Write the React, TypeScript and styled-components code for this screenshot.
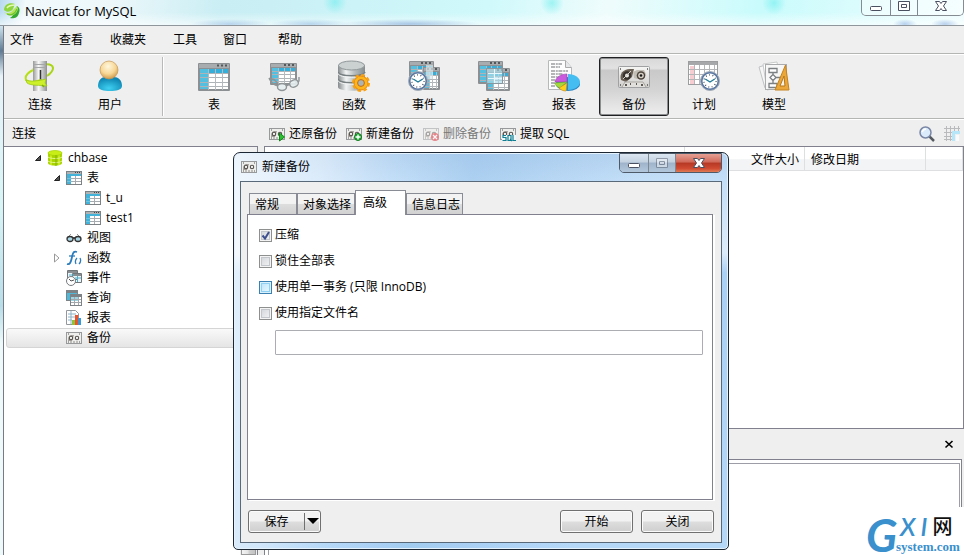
import React, { useState } from "react";
import styled, { createGlobalStyle, css } from "styled-components";

const UI_FONT = `"Open Sans", "Noto Sans CJK SC", sans-serif`;

const GlobalStyle = createGlobalStyle`
  *, *::before, *::after { box-sizing: border-box; }
  html, body, #root { height: 100%; }
  body {
    margin: 0;
    overflow: hidden;
    font: 12px/20px ${UI_FONT};
    color: #000;
    background: #fff;
  }
  button, input { font: inherit; color: inherit; }
  svg { display: block; flex: none; }
`;

/* ---------- icons ---------- */

const TableGlyph = ({ x = 0, y = 0, w = 32, h = 28 }: { x?: number; y?: number; w?: number; h?: number }) => {
  const bar = Math.round(h * 0.17);
  const col = Math.round(w * 0.27);
  const rows = [1, 2, 3, 4];
  const bodyH = h - bar - 2;
  return (
    <g transform={`translate(${x} ${y})`}>
      <rect width={w} height={h} rx="1" fill="#8d9092" />
      <rect x="1" y="1" width={w - 2} height={bar - 1} fill="#a9acae" />
      <path d={`M${w - 13} ${bar / 2}h2m2 0h2m2 0h2`} stroke="#54585b" strokeWidth="2" />
      <rect x="2" y={bar + 1} width={w - 4} height={bodyH - 1} fill="#fff" />
      <rect x="2" y={bar + 1} width={w - 4} height={Math.round(bodyH / 5)} fill="#35aeda" />
      <rect x="2" y={bar + 1} width={col - 1} height={bodyH - 1} fill="#55bfdf" />
      {rows.map((r) => (
        <path key={r} d={`M2 ${bar + 1 + Math.round((r * bodyH) / 5) + 0.5}H${w - 2}`} stroke="#adb3b6" />
      ))}
      {[0, 1, 2].map((c) => (
        <path key={c} d={`M${col + 1.5 + Math.round((c * (w - col - 2)) / 3)} ${bar + 1}V${h - 1}`} stroke="#b4babd" />
      ))}
    </g>
  );
};

const ClockGlyph = ({ cx, cy, r }: { cx: number; cy: number; r: number }) => (
  <g>
    <circle cx={cx} cy={cy} r={r} fill="#5a78a3" stroke="#a6afb9" />
    <circle cx={cx} cy={cy} r={r - 2} fill="#fff" />
    <circle cx={cx} cy={cy} r={r - 3.4} fill="none" stroke="#38434f" strokeWidth="1.4" strokeDasharray="0.8 2.6" />
    <path d={`M${cx - r / 2} ${cy - 2}L${cx} ${cy + 1}L${cx + r / 2} ${cy - 2}`} fill="none" stroke="#237b98" strokeWidth="1.4" />
  </g>
);

const ServerIcon = () => (
  <svg width="32" height="32" viewBox="0 0 32 32">
    <defs>
      <linearGradient id="metal"><stop stopColor="#999" /><stop offset=".4" stopColor="#f8f8f8" /><stop offset="1" stopColor="#8f9192" /></linearGradient>
    </defs>
    <path d="M9 9C16 4 28 2 29 8c0 3-3 6-6 8" fill="none" stroke="#a9d514" strokeWidth="2" />
    <rect x="9" y="1" width="14" height="30" fill="url(#metal)" />
    <path d="M10 4.500h12M10 7.500h12" stroke="#a4a6a7" />
    <path d="M16.500 10v10" stroke="#333" strokeWidth="1.500" />
    <path d="M9 10C3 13 1 17 2 20c3 3 10 2 15 0" fill="none" stroke="#b7df18" strokeWidth="2" />
    <path d="M2 20c4 2 12 1 20-1l-1 4 2 3c-7-1-16 0-20-3z" fill="#cdf02a" stroke="#97c60f" strokeWidth=".7" />
    <path d="M18 25l2 2" stroke="#7fae08" strokeWidth="1.500" />
  </svg>
);

const UserIcon = () => (
  <svg width="32" height="32" viewBox="0 0 32 32">
    <defs>
      <radialGradient id="head" cx=".45" cy=".3" r=".7"><stop stopColor="#fff7df" /><stop offset=".6" stopColor="#f7d795" /><stop offset="1" stopColor="#cf9a4c" /></radialGradient>
      <radialGradient id="torso" cx=".45" cy=".8" r=".7"><stop stopColor="#3fd0f2" /><stop offset="1" stopColor="#0e87b4" /></radialGradient>
    </defs>
    <path d="M4 26c0-6 4-9 7-9h9c4 0 8 3 8 9 0 4-6 5-12 5S4 30 4 26z" fill="url(#torso)" />
    <circle cx="15" cy="10" r="9" fill="url(#head)" stroke="#c69654" strokeWidth=".7" />
  </svg>
);

const TableIcon = () => (
  <svg width="32" height="32" viewBox="0 0 32 32"><TableGlyph x={0} y={3} w={32} h={28} /></svg>
);

const ViewIcon = () => (
  <svg width="32" height="32" viewBox="0 0 32 32">
    <TableGlyph x={2} y={3} w={27} h={22} />
    <g fill="#e6eeef" fillOpacity=".9" stroke="#8f9496" strokeWidth="1.400">
      <path d="M1 18.500l5 1 4 4M31 17v4l-4 4" fill="none" />
      <ellipse cx="14" cy="27" rx="4.500" ry="3.500" /><ellipse cx="26" cy="23.500" rx="4.500" ry="3.500" transform="rotate(-25 26 23.500)" />
      <path d="M1 18c2 5 5 7 9 8M18 26l4-2" fill="none" />
    </g>
  </svg>
);

const FunctionIcon = () => (
  <svg width="32" height="32" viewBox="0 0 32 32">
    <defs>
      <linearGradient id="drum"><stop stopColor="#858a8c" /><stop offset=".3" stopColor="#f2f4f4" /><stop offset=".6" stopColor="#b9bfc0" /><stop offset="1" stopColor="#858d8f" /></linearGradient>
    </defs>
    <path d="M0 5v22c0 5 27 5 27 0V5z" fill="url(#drum)" />
    <ellipse cx="13.500" cy="5.500" rx="13" ry="4.500" fill="#cbd1d1" stroke="#909798" />
    <path d="M0 12c1 5 26 5 27 0M0 19c1 5 26 5 27 0" fill="none" stroke="#777f80" strokeWidth="1.500" />
    <path d="M0 13.500c1 5 26 5 27 0M0 20.500c1 5 26 5 27 0" fill="none" stroke="#f4f6f6" />
    <circle cx="23" cy="23" r="7" fill="#fcb51b" stroke="#ee860b" strokeWidth="1" />
    <circle cx="23" cy="23" r="8" fill="none" stroke="#f8a010" strokeWidth="2" strokeDasharray="3.600 2.683" />
    <circle cx="23" cy="23" r="3.400" fill="#aab4b4" stroke="#c96a0c" />
  </svg>
);

const EventIcon = () => (
  <svg width="32" height="32" viewBox="0 0 32 32">
    <TableGlyph x={1} y={1} w={25} h={22} /><TableGlyph x={15} y={7} w={17} h={23} />
    <path d="M18 5h7v14h-7z" fill="#dae8ed" fillOpacity=".7" />
    <ClockGlyph cx={10} cy={21} r={9.5} />
  </svg>
);

const QueryIcon = () => (
  <svg width="32" height="32" viewBox="0 0 32 32">
    <TableGlyph x={0} y={1} w={25} h={23} /><TableGlyph x={8} y={8} w={24} h={23} />
    <path d="M8.500 8.500h16v15h-16z" fill="#a9dceb" fillOpacity=".65" stroke="#87979d" />
    <path d="M10 13.500h14M10 18.500h14M16.500 9v14" stroke="#e8f7fb" />
  </svg>
);

const ReportIcon = () => (
  <svg width="32" height="32" viewBox="0 0 32 32">
    <path d="M.5.500h17l6 7v22H.500z" fill="#fdfdfd" stroke="#b6b8b9" />
    <path d="M17.500.500v7h6" fill="#e5e7e8" stroke="#aaa" />
    <path d="M3 4h11M3 7h9M3 11h17M3 14h12M3 17h8M3 20h5M3 23h6M3 26h4" stroke="#6a6e71" strokeWidth="1.200" strokeDasharray="4 .8 2 .6" />
    <ellipse cx="20" cy="24" rx="12" ry="7" fill="#2a87c4" />
    <path d="M20 14c7 0 12 4 12 8s-5 8-12 8z" fill="#45bdf0" />
    <path d="M19 14v8L7 22c1-5 6-8 12-8z" fill="#c95bdc" stroke="#9a41ad" strokeWidth=".6" />
    <path d="M7 23l12-1-7 6c-3-1-5-3-5-5z" fill="#a5d93b" stroke="#74a824" strokeWidth=".6" />
    <path d="M19 23l-1 8c-3 0-5-1-7-3z" fill="#ffd11c" stroke="#d08a12" strokeWidth=".6" />
  </svg>
);

const BackupIcon = () => (
  <svg width="32" height="32" viewBox="0 0 32 32">
    <defs><linearGradient id="tape" x2="0" y2="1"><stop stopColor="#f6f6f5" /><stop offset="1" stopColor="#cfcecb" /></linearGradient></defs>
    <rect x=".5" y="6.500" width="31" height="21" rx="1" fill="url(#tape)" stroke="#9fa1a2" />
    <path d="M3 20C1 14 5 9 12 9h4l-2 8-6 5z" fill="#6a6056" />
    <circle cx="9" cy="15.500" r="4.200" fill="#38322e" /><circle cx="9" cy="15.500" r="2" fill="#eceae5" />
    <path d="M5 19l8-8" stroke="#d9d3cb" />
    <path d="M15 12l4-2h7l2 4-3 5h-6l-3-1z" fill="#c3beb5" />
    <circle cx="23" cy="15.500" r="4.300" fill="#4c453d" /><circle cx="23" cy="15.500" r="2.800" fill="#d7d0c4" /><circle cx="23" cy="15.500" r="1.300" fill="#1a1a1a" />
    <path d="M4 27l3-5h18l3 5" fill="#e2e0dc" stroke="#a9a6a0" />
    <path d="M7 25h2m3-1h1m5 0h1m4 1h2" stroke="#5c5853" strokeWidth="2" />
    <path d="M2 9h1M29 9h1M2 25h1M29 25h1" stroke="#555" strokeWidth="1.500" />
  </svg>
);

const ScheduleIcon = () => (
  <svg width="32" height="32" viewBox="0 0 32 32">
    <rect x=".5" y="1.500" width="29" height="23" fill="#fff" stroke="#9b9d9f" />
    <path d="M1 2h28v3H1z" fill="#a6a8aa" />
    <path d="M2 6h4v18H2z" fill="#f8cdd1" />
    <path d="M1 9.500h28M1 14.500h28M1 19.500h28M6.500 5v19M11.500 5v19M16.500 5v19M21.500 5v19M26.500 5v19" stroke="#b4b6b8" />
    <ClockGlyph cx={22} cy={21} r={9.5} />
  </svg>
);

const ModelIcon = () => (
  <svg width="32" height="32" viewBox="0 0 32 32">
    <path d="M1 7l13-4 6 22-13 3z" fill="#f6f6f6" stroke="#bfc1c2" />
    <path d="M5 4l14-2 4 25-14 3z" fill="#fff" stroke="#c8cacb" />
    <rect x="7.500" y="4.500" width="21" height="25" fill="#f7f7f7" stroke="#a9abac" />
    <path d="M11 8.500h8v4h-8zM11 23.500h8v4h-8zM15 12.500v2l3 3-3 3-3-3 3-3M15 20.500v3M18 17.500h6" fill="#fff" stroke="#7c8082" strokeWidth="1.300" />
    <path d="M27.500 5L31 30H17z" fill="#eba73a" stroke="#c4821c" /><path d="M26 16l1 10h-5z" fill="#f5f2e8" stroke="#b77718" />
  </svg>
);

const MiniTable = () => (
  <svg width="16" height="16" viewBox="0 0 16 16" shapeRendering="crispEdges">
    <path d="M0 1h16v14H0z" fill="#7d8285" /><path d="M1 2h14v2H1z" fill="#aeb3b5" />
    <path d="M9 2h1v1H9zM11 2h1v1h-1zM13 2h1v1h-1z" fill="#444" />
    <path d="M1 4h14v10H1z" fill="#fff" /><path d="M1 4h4v10H1zM1 4h14v2H1z" fill="#43b3da" />
    <path d="M5 8h10v1H5zM5 11h10v1H5zM9 6h1v8H9z" fill="#a5abae" />
    <path d="M1 8h4v1H1zM1 11h4v1H1z" fill="#6cc5e2" />
  </svg>
);

const MiniDatabase = () => (
  <svg width="16" height="16" viewBox="0 0 16 16">
    <path d="M1 3v10c0 3.500 14 3.500 14 0V3z" fill="#a9d400" />
    <path d="M4 4v11M12 4v11" stroke="#c9ea22" strokeWidth="2" />
    <ellipse cx="8" cy="3" rx="7" ry="2.500" fill="#c9ee17" stroke="#a5d000" strokeWidth=".7" />
    <path d="M1 7c2 2 12 2 14 0M1 11c2 2 12 2 14 0" fill="none" stroke="#e4f78c" /><path d="M9 5v11" stroke="#84b000" />
  </svg>
);

const MiniGlasses = () => (
  <svg width="16" height="16" viewBox="0 0 16 16">
    <path d="M2 7l3-3M11 4l3 3" stroke="#999" fill="none" />
    <ellipse cx="4" cy="9" rx="3" ry="2.500" fill="#a9d6e4" stroke="#333" strokeWidth="1.300" />
    <ellipse cx="12" cy="9" rx="3" ry="2.500" fill="#a9d6e4" stroke="#333" strokeWidth="1.300" /><path d="M7 8h2" stroke="#222" strokeWidth="1.500" />
  </svg>
);

const MiniFunction = () => (
  <svg width="16" height="16" viewBox="0 0 16 16" fill="none" stroke="#2d7cbb">
    <path d="M1 14c3 1 4-2 5-7s2-6 5-5" strokeWidth="1.800" /><path d="M3 6h6" strokeWidth="1.300" />
    <path d="M11 8c-2 2-2 4-1 6M14 8c1 2 1 4-1 6" strokeWidth="1.300" />
  </svg>
);

const MiniEvent = () => (
  <svg width="16" height="16" viewBox="0 0 16 16">
    <path d="M1.500.500h10v9h-10zM6.500 3.500h9v9h-9z" fill="#e8f5fa" stroke="#707679" />
    <path d="M2 2h9M7 5h8" stroke="#888e91" strokeWidth="2" /><path d="M3 5h5M9 8h6M11.500 6v6" stroke="#51aecb" />
    <circle cx="5" cy="11" r="4.500" fill="#fff" stroke="#777b7e" /><path d="M3 9l2 2 3-1" fill="none" stroke="#555" />
  </svg>
);

const MiniQuery = () => (
  <svg width="16" height="16" viewBox="0 0 16 16" shapeRendering="crispEdges">
    <path d="M0 0h12v11H0z" fill="#7c8285" /><path d="M1 3h10v7H1z" fill="#4fb7d8" />
    <path d="M4 4h12v12H4z" fill="#7c8285" /><path d="M5 7h10v8H5z" fill="#fff" />
    <path d="M5 7h7v4H5z" fill="#9dd7e6" /><path d="M5 9h10v1H5zM5 12h10v1H5zM8 7h1v8H8zM12 7h1v8h-1z" fill="#a2a8ab" />
  </svg>
);

const MiniReport = () => (
  <svg width="16" height="16" viewBox="0 0 16 16">
    <path d="M.5.500h9l3 3v11H.500z" fill="#fff" stroke="#92989c" /><path d="M2 4h8M2 7h8M2 10h4M5 1v13" stroke="#8eb4c6" />
    <path d="M6 10h3v5H6z" fill="#8ac53a" /><path d="M9 5h3v10H9z" fill="#e8542c" /><path d="M12 8h3v7h-3z" fill="#3d97d0" />
  </svg>
);

type Mark = "restore" | "add" | "remove" | "sql";
const MiniTape = ({ mark }: { mark?: Mark }) => (
  <svg width="16" height="16" viewBox="0 0 16 16" opacity={mark === "remove" ? 0.5 : 1}>
    <rect x=".5" y="2.500" width="15" height="11" fill="#eeeeec" stroke="#97999b" />
    <path d="M2 11c0-6 2-6 6-6l-2 6z" fill="#a39e99" />
    <circle cx="5" cy="8" r="1.700" fill="#f5f5f5" stroke="#57524e" strokeWidth="1.100" />
    <circle cx="11" cy="8" r="1.700" fill="#f5f5f5" stroke="#57524e" strokeWidth="1.100" />
    <path d="M4 12h8" stroke="#8e8c89" strokeDasharray="2 1" />
    <path d="M2 4h1M13 4h1M2 12h1M13 12h1" stroke="#555" />
    {mark === "restore" && <path d="M10.500 7v8l5-4z" fill="#2fbf32" stroke="#0a8912" />}
    {mark === "add" && <g><circle cx="12" cy="11" r="3.500" fill="#26a838" stroke="#0e7d1d" /><path d="M9.500 11h5M12 8.500v5" stroke="#fff" strokeWidth="1.400" /></g>}
    {mark === "remove" && <g><circle cx="12" cy="11" r="4" fill="#d8202a" /><path d="M10 9l4 4M14 9l-4 4" stroke="#fff" strokeWidth="1.300" /></g>}
    {mark === "sql" && (
      <g>
        <path d="M2 9h14v6H2z" fill="#eef8fa" />
        <path d="M6 9.500H3v2h3v3H2.500M8 9.500h3v5H8zM10 13l2 2M13 9v5.500h3" fill="none" stroke="#107d91" strokeWidth="1.200" />
      </g>
    )}
  </svg>
);

const AppLogo = () => (
  <svg width="16" height="16" viewBox="0 0 16 16">
    <path d="M0 7C0 2 5-1 11 1L9 6C7 9 3 10 0 7z" fill="#8fd63c" /><path d="M3 5c2-3 5-3 8-3" stroke="#e4fab4" strokeWidth="1.500" fill="none" />
    <path d="M13 3c3 2 3 4 2 7-1 5-6 6-9 5 3-2 3-3 4-7z" fill="#35a932" />
    <path d="M0 9c3 2 7 1 9-2l4-4 1 3c-2 7-8 9-14 3z" fill="#b5e65a" />
    <path d="M3 11c4 2 8 0 10-5" fill="none" stroke="#6cc22e" strokeWidth="1.200" />
  </svg>
);

const SearchGlyph = () => (
  <svg width="16" height="16" viewBox="0 0 16 16">
    <path d="M10 10l5 5" stroke="#555a60" strokeWidth="2.500" /><circle cx="6.500" cy="6.500" r="5.500" fill="#dcebfb" stroke="#7a86a5" strokeWidth="1.500" />
    <path d="M3 6c1-2 2-3 4-3" stroke="#fff" strokeWidth="1.500" fill="none" />
  </svg>
);

const GridGlyph = () => (
  <svg width="16" height="16" viewBox="0 0 16 16" shapeRendering="crispEdges">
    <path d="M2.500 0v15M6.500 0v15M10.500 0v6M14.500 0v6M0 2.500h16M0 6.500h8M0 10.500h8M0 13.500h8" stroke="#b8babb" />
    <path d="M8 5h8v3h-5v7H8z" fill="#b6e6f7" /><path d="M12 9h3v6h-3z" fill="#fafafa" />
  </svg>
);

const WindowGlyph = ({ kind, muted }: { kind: "min" | "max" | "close"; muted?: boolean }) => (
  <svg width="14" height="12" viewBox="0 0 14 12" opacity={muted ? 0.45 : 1}>
    {kind === "min" && <rect x="1.500" y="6.500" width="11" height="4" rx="1" fill="#fff" stroke="#4b5061" />}
    {kind === "max" && <path d="M1.500 1.500h11v9h-11zM4.500 4.500h5v3h-5z" fill="#fff" stroke="#4b5061" />}
    {kind === "close" && <path d="M1.500 1.500h4L7 3.500l1.500-2h4L9.500 6l3 4.500h-4L7 8.500l-1.500 2h-4l3-4.500z" fill="#fff" stroke="#4b5061" />}
  </svg>
);

/* ---------- main window ---------- */

const Desktop = styled.main`
  position: relative;
  height: 100%;
  min-height: 420px;
  display: flex;
  flex-direction: column;
  overflow: hidden;
`;

const TitleBar = styled.header`
  flex: none;
  height: 26px;
  display: flex;
  align-items: flex-start;
  justify-content: space-between;
  padding-left: 4px;
  border-bottom: 1px solid #8f979d;
  background:
    radial-gradient(ellipse 40px 5px at 230px 24px, rgba(110, 160, 215, 0.4), transparent),
    radial-gradient(ellipse 40px 5px at 310px 24px, rgba(110, 160, 215, 0.4), transparent),
    radial-gradient(ellipse 70px 5px at 410px 24px, rgba(90, 135, 200, 0.45), transparent),
    radial-gradient(ellipse 12px 5px at 905px 24px, rgba(90, 140, 210, 0.4), transparent),
    radial-gradient(ellipse 14px 5px at 945px 24px, rgba(90, 140, 210, 0.4), transparent),
    radial-gradient(ellipse 12px 12px at 335px 2px, rgba(90, 235, 235, 0.5), transparent),
    radial-gradient(ellipse 12px 12px at 552px 3px, rgba(90, 235, 235, 0.5), transparent),
    radial-gradient(ellipse 12px 12px at 774px 3px, rgba(90, 235, 235, 0.5), transparent),
    linear-gradient(rgba(255, 255, 255, 0) 50%, rgba(255, 255, 255, 0.6)),
    linear-gradient(100deg, #b7d9ee 0, #f1f9fb 26px, #edf7fa 110px, #c9eef4 220px, #cff9fb 480px, #effcfc 600px, #c9fbfc 750px, #effdfe 100%);
`;

const AppTitle = styled.h1`
  display: flex;
  align-items: center;
  gap: 5px;
  height: 21px;
  margin: 0;
  font-size: 13px;
  line-height: 20px;
  font-weight: 400;
`;

const CaptionButtons = styled.div<{ $dialog?: boolean }>`
  display: grid;
  grid-template-columns: 28px 27px 46px;
  height: ${(p) => (p.$dialog ? 20 : 16)}px;
  border: 1px solid ${(p) => (p.$dialog ? "#4e5a68" : "#858d92")};
  border-top-width: ${(p) => (p.$dialog ? 1 : 0)}px;
  border-radius: 0 0 5px 5px;
  overflow: hidden;
`;

const CaptionButton = styled.button<{ $tone: "clear" | "steel" | "red" }>`
  display: grid;
  place-items: center;
  padding: 0 0 ${(p) => (p.$tone === "clear" ? 4 : 0)}px;
  border: 0;
  & + & { border-left: 1px solid #7d8892; }
  background: ${(p) =>
    p.$tone === "red"
      ? "linear-gradient(#e5a093, #d0695a 45%, #b53825 50%, #cf4a31 80%, #e07c56)"
      : p.$tone === "steel"
        ? "linear-gradient(#dce7f2, #c3d1e0 45%, #9fb3ca 50%, #b3c7dc)"
        : "rgba(255, 255, 255, 0.45)"};
`;

const FrameBackdrop = styled.div`
  flex: 1;
  min-height: 0;
  display: flex;
  flex-direction: column;
  background: linear-gradient(#cfe4ee, #5f7b94 25px, #e8f3f8 50px, #d9f5f6 180px, #b9dde8 280px, #eefafa 60%);
`;

const Frame = styled.div`
  flex: 1;
  min-height: 0;
  display: flex;
  flex-direction: column;
  margin-left: 3px;
  border-left: 1px solid #777b84;
  background: #efefef;
`;

const MenuBar = styled.nav`
  flex: none;
  height: 28px;
  display: grid;
  grid-template-columns: 49px 51px 63px 50px 55px auto;
  align-items: center;
  justify-content: start;
  padding: 1px 0 0 6px;
  border-bottom: 1px solid #b4b6b4;
`;

const PlainButton = styled.button`
  padding: 0;
  border: 0;
  background: none;
  text-align: left;
  line-height: 20px;
`;

const ToolBar = styled.div`
  flex: none;
  display: flex;
  height: 65px;
  padding: 2px 0 2px 1px;
  border-top: 1px solid #fff;
  border-bottom: 1px solid #b4b6b4;
`;

const ToolDivider = styled.span`
  width: 2px;
  margin: 0 15px 0 17px;
  border-left: 1px solid #b8bab8;
  border-right: 1px solid #fff;
`;

const ToolButton = styled.button<{ $active?: boolean }>`
  width: 70px;
  display: flex;
  flex-direction: column;
  align-items: center;
  justify-content: flex-start;
  gap: 3px;
  padding: 2px 0 0;
  border: 1px solid transparent;
  border-radius: 3px;
  background: none;
  ${(p) =>
    p.$active &&
    css`
      border-color: #1f2123;
      box-shadow: inset 0 0 0 1px #8b8d8e;
      background: linear-gradient(#d8d8d8 0, #e2e2e2 18%, #c9c9c9 22%, #d3d3d3 55%, #eeeeee);
    `}
`;

const SubBar = styled.div`
  flex: none;
  display: flex;
  align-items: center;
  height: 27px;
  padding: 1px 4px 0 8px;
  border-top: 1px solid #fff;
`;

const SubTitle = styled.h2`
  width: 257px;
  margin: 0;
  font-size: 12px;
  font-weight: 400;
`;

const Actions = styled.div`
  flex: 1;
  display: flex;
  gap: 9px;
`;

const ActionButton = styled(PlainButton)`
  display: flex;
  align-items: center;
  gap: 4px;
  &:disabled { color: #777; }
`;

const Tools = styled.div`
  display: flex;
  gap: 9px;
`;

const Workspace = styled.div`
  flex: 1;
  min-height: 0;
  display: grid;
  grid-template-columns: 254px 1fr;
  column-gap: 6px;
`;

const TreePane = styled.aside`
  display: grid;
  grid-template-columns: 1fr 17px;
  border: solid #80808e;
  border-width: 1px 1px 0 0;
  background: #fff;
`;

const ScrollTrack = styled.div`
  padding: 18px 1px 0;
  background: #f0f0f0;
`;

const ScrollThumb = styled.div`
  height: 100%;
  border: 1px solid #9a9a9a;
  background: linear-gradient(90deg, #f4f4f4, #e5e5e5 45%, #cfcfcf 55%, #c2c2c2);
`;

const Tree = styled.ul`
  margin: 0;
  padding: 1px 0 0 2px;
  list-style: none;
  min-width: 0;
`;

const TreeRow = styled.li<{ $level: number; $selected?: boolean }>`
  display: flex;
  align-items: center;
  height: 20px;
  padding-left: ${(p) => 27 + p.$level * 19}px;
  border: 1px solid transparent;
  border-radius: 3px;
  ${(p) =>
    p.$selected &&
    css`
      border-color: #d5d5d5;
      background: linear-gradient(#f9f9f9, #e5e5e5);
    `}
`;

const Twisty = styled.span`
  width: 13px;
  flex: none;
`;

const TreeLabel = styled.span`
  padding-left: 5px;
  white-space: nowrap;
`;

const RightPane = styled.section`
  min-width: 0;
  display: grid;
  grid-template-rows: minmax(0, 283fr) 30px minmax(0, 96fr);
`;

const ListPane = styled.div`
  border: 1px solid #80808e;
  background: #fff;
  overflow: hidden;
`;

const ListTable = styled.table`
  width: 100%;
  table-layout: fixed;
  border-collapse: separate;
  border-spacing: 0;
`;

const HeadCell = styled.th<{ $width?: number; $end?: boolean }>`
  width: ${(p) => (p.$width ? `${p.$width}px` : "auto")};
  height: 24px;
  padding: 2px 5px 0 6px;
  font-weight: 400;
  text-align: ${(p) => (p.$end ? "right" : "left")};
  border: solid #dddfe1;
  border-width: 0 1px 1px 0;
  background: linear-gradient(#fff 50%, #f3f4f5 55%);
`;

const InfoStrip = styled.div`
  display: flex;
  align-items: center;
  justify-content: flex-end;
  padding-right: 10px;
`;

const InfoPane = styled.div`
  margin-right: 2px;
  padding: 3px 1px 0 3px;
  border: solid #80808e;
  border-width: 1px 1px 0 1px;
  background: #fff;
`;

const InfoInner = styled.div`
  height: 100%;
  border: solid #9d9da8;
  border-width: 1px 1px 0 1px;
`;

/* ---------- dialog ---------- */

const Dialog = styled.section`
  position: absolute;
  left: 233px;
  right: 235px;
  top: 152px;
  bottom: 5px;
  display: flex;
  flex-direction: column;
  padding: 0 6px 6px;
  border: 1px solid #1d2733;
  border-radius: 7px 7px 5px 5px;
  box-shadow: inset 0 0 0 1px #e4f2fd;
  background:
    linear-gradient(100deg, rgba(255, 255, 255, 0.75) 0, rgba(255, 255, 255, 0.4) 90px, transparent 160px, rgba(120, 175, 225, 0.3) 240px, transparent 400px),
    linear-gradient(#b6d3f0 0, #c4dff8 28px, #dcebf9 100px, #a9d0f5 120px, #b5d8f8);
`;

const DialogTitle = styled.header`
  flex: none;
  height: 28px;
  display: flex;
  align-items: flex-start;
  justify-content: space-between;
`;

const DialogName = styled.h2`
  display: flex;
  align-items: center;
  gap: 5px;
  height: 28px;
  margin: 0;
  padding-left: 1px;
  font-size: 12px;
  font-weight: 400;
`;

const DialogBody = styled.div`
  flex: 1;
  min-height: 0;
  display: flex;
  flex-direction: column;
  padding: 8px 7px 9px 6px;
  border: 1px solid #59697a;
  background: #efefef;
`;

const TabList = styled.div`
  flex: none;
  display: grid;
  grid-template-columns: 48px 58px 51px 57px;
  align-items: end;
  padding-left: 2px;
  height: 24px;
`;

const Tab = styled.button<{ $active?: boolean }>`
  height: ${(p) => (p.$active ? 25 : 22)}px;
  padding: 0 0 0 ${(p) => (p.$active ? 7 : 5)}px;
  text-align: left;
  line-height: 20px;
  white-space: nowrap;
  border: 1px solid #898c95;
  border-bottom: 0;
  background: linear-gradient(#f3f3f3 45%, #dddddd 50%, #d0d0d0);
  ${(p) =>
    p.$active &&
    css`
      position: relative;
      align-self: start;
      background: #fff;
    `}
`;

const TabPage = styled.div`
  flex: 1;
  min-height: 0;
  display: flex;
  flex-direction: column;
  gap: 6px;
  margin-right: 1px;
  padding: 10px 9px 0 11px;
  border: 1px solid #80808e;
  box-shadow: 2px 1px 0 #fff;
  background: #fff;
`;

const Option = styled.label`
  display: flex;
  align-items: center;
  gap: 3px;
  height: 20px;
`;

const BoxWrap = styled.span`
  position: relative;
  display: block;
  width: 13px;
  height: 13px;
  svg {
    position: absolute;
    inset: 0;
    visibility: hidden;
    pointer-events: none;
  }
  input:checked + svg { visibility: visible; }
`;

const Box = styled.input<{ $hot?: boolean }>`
  appearance: none;
  display: block;
  width: 13px;
  height: 13px;
  margin: 0;
  border: 1px solid ${(p) => (p.$hot ? "#3c7fb1" : "#8e8f8f")};
  box-shadow: inset 0 0 0 1px ${(p) => (p.$hot ? "#d9f1fc" : "#f4f4f4")}, inset 0 0 0 2px ${(p) => (p.$hot ? "#8fd0f3" : "#c3c6cb")};
  background: ${(p) => (p.$hot ? "linear-gradient(135deg, #b5e2fa, #f1fafe)" : "linear-gradient(135deg, #cfd3d8, #f6f6f6)")};
`;

const FileName = styled.input`
  flex: none;
  height: 25px;
  margin: 1px 0 0 16px;
  padding: 0 4px;
  border: 1px solid #abadb3;
  border-radius: 1px;
  background: #fff;
`;

const DialogFooter = styled.footer`
  flex: none;
  display: flex;
  gap: 8px;
  margin-top: 10px;
  padding: 0 0 0 1px;
`;

const face = css`
  height: 23px;
  border: 1px solid #707070;
  border-radius: 3px;
  box-shadow: inset 0 0 0 1px #fbfbfb;
  background: linear-gradient(#f2f2f2 48%, #dddddd 52%, #cfcfcf);
`;

const PushButton = styled.button`
  ${face}
  width: 73px;
  padding: 0;
  line-height: 20px;
`;

const SplitButton = styled.div`
  ${face}
  width: 73px;
  display: grid;
  grid-template-columns: 1fr 16px;
  margin-right: auto;
`;

const SplitPart = styled.button`
  display: grid;
  place-items: center;
  padding: 0;
  line-height: 20px;
  border: 0;
  background: none;
`;

const SplitArrow = styled(SplitPart)`
  margin: 2px 0;
  border-left: 1px solid #707070;
`;

/* ---------- watermark ---------- */

const Watermark = styled.div`
  position: absolute;
  right: 0;
  bottom: 0;
  width: 98px;
  height: 48px;
  display: grid;
  grid-template-columns: 30px 1fr;
  background: #fff;
  color: #3a8fcd;
`;

const BigLetter = styled.span`
  font: italic 700 46px/56px Lato, sans-serif;
`;

const MarkRight = styled.span`
  display: flex;
  flex-direction: column;
`;

const MarkTop = styled.span`
  display: flex;
  align-items: center;
  gap: 5px;
  height: 33px;
  padding: 4px 0 0 4px;
  font: italic 600 25px/28px Lato, sans-serif;
`;

const MarkHan = styled.span`
  color: #111;
  font: 500 20px/28px "Noto Sans CJK SC", sans-serif;
`;

const MarkDomain = styled.span`
  font: bold 13px/14px "Liberation Serif", serif;
`;

/* ---------- data ---------- */

const menus = ["文件", "查看", "收藏夹", "工具", "窗口", "帮助"];

const connectTools = [
  { label: "连接", icon: <ServerIcon /> },
  { label: "用户", icon: <UserIcon /> },
];

const objectTools = [
  { label: "表", icon: <TableIcon /> },
  { label: "视图", icon: <ViewIcon /> },
  { label: "函数", icon: <FunctionIcon /> },
  { label: "事件", icon: <EventIcon /> },
  { label: "查询", icon: <QueryIcon /> },
  { label: "报表", icon: <ReportIcon /> },
  { label: "备份", icon: <BackupIcon />, active: true },
  { label: "计划", icon: <ScheduleIcon /> },
  { label: "模型", icon: <ModelIcon /> },
];

const actions: { label: string; mark: Mark; disabled?: boolean }[] = [
  { label: "还原备份", mark: "restore" },
  { label: "新建备份", mark: "add" },
  { label: "删除备份", mark: "remove", disabled: true },
  { label: "提取 SQL", mark: "sql" },
];

const tree: { label: string; level: number; icon: React.ReactNode; state?: "open" | "closed"; selected?: boolean }[] = [
  { label: "chbase", level: 0, icon: <MiniDatabase />, state: "open" },
  { label: "表", level: 1, icon: <MiniTable />, state: "open" },
  { label: "t_u", level: 2, icon: <MiniTable /> },
  { label: "test1", level: 2, icon: <MiniTable /> },
  { label: "视图", level: 1, icon: <MiniGlasses /> },
  { label: "函数", level: 1, icon: <MiniFunction />, state: "closed" },
  { label: "事件", level: 1, icon: <MiniEvent /> },
  { label: "查询", level: 1, icon: <MiniQuery /> },
  { label: "报表", level: 1, icon: <MiniReport /> },
  { label: "备份", level: 1, icon: <MiniTape />, selected: true },
];

const tabs = ["常规", "对象选择", "高级", "信息日志"];

const options = [
  { label: "压缩" },
  { label: "锁住全部表" },
  { label: "使用单一事务 (只限 InnoDB)", hot: true },
  { label: "使用指定文件名" },
];

export default function App() {
  const [checked, setChecked] = useState([true, false, false, false]);
  const toggle = (i: number) => setChecked((c) => c.map((v, n) => (n === i ? !v : v)));

  return (
    <Desktop>
      <GlobalStyle />
      <TitleBar>
        <AppTitle><AppLogo />Navicat for MySQL</AppTitle>
        <CaptionButtons>
          <CaptionButton $tone="clear" aria-label="最小化"><WindowGlyph kind="min" /></CaptionButton>
          <CaptionButton $tone="clear" aria-label="最大化"><WindowGlyph kind="max" /></CaptionButton>
          <CaptionButton $tone="clear" aria-label="关闭窗口"><WindowGlyph kind="close" /></CaptionButton>
        </CaptionButtons>
      </TitleBar>

      <FrameBackdrop>
        <Frame>
          <MenuBar>{menus.map((m) => <PlainButton key={m}>{m}</PlainButton>)}</MenuBar>

          <ToolBar>
            {connectTools.map((t) => <ToolButton key={t.label}>{t.icon}{t.label}</ToolButton>)}
            <ToolDivider />
            {objectTools.map((t) => <ToolButton key={t.label} $active={t.active}>{t.icon}{t.label}</ToolButton>)}
          </ToolBar>

          <SubBar>
            <SubTitle>连接</SubTitle>
            <Actions>
              {actions.map((a) => (
                <ActionButton key={a.label} disabled={a.disabled}><MiniTape mark={a.mark} />{a.label}</ActionButton>
              ))}
            </Actions>
            <Tools>
              <PlainButton aria-label="搜索"><SearchGlyph /></PlainButton>
              <PlainButton aria-label="网格"><GridGlyph /></PlainButton>
            </Tools>
          </SubBar>

          <Workspace>
            <TreePane>
              <Tree>
                {tree.map((n) => (
                  <TreeRow key={n.label} $level={n.level} $selected={n.selected}>
                    <Twisty>
                      {n.state === "open" && <svg width="8" height="8" viewBox="0 0 8 8"><path d="M6.500 1.500v5h-5z" fill="#555" stroke="#222" /></svg>}
                      {n.state === "closed" && <svg width="8" height="10" viewBox="0 0 8 10"><path d="M1.500 1l4.500 4-4.500 4z" fill="#fff" stroke="#999" /></svg>}
                    </Twisty>
                    {n.icon}
                    <TreeLabel>{n.label}</TreeLabel>
                  </TreeRow>
                ))}
              </Tree>
              <ScrollTrack><ScrollThumb /></ScrollTrack>
            </TreePane>

            <RightPane>
              <ListPane>
                <ListTable>
                  <thead>
                    <tr>
                      <HeadCell />
                      <HeadCell $width={120} $end>文件大小</HeadCell>
                      <HeadCell $width={121}>修改日期</HeadCell>
                      <HeadCell $width={37} />
                    </tr>
                  </thead>
                </ListTable>
              </ListPane>
              <InfoStrip>
                <PlainButton aria-label="关闭面板">
                  <svg width="10" height="10" viewBox="0 0 10 10"><path d="M1.500 2l7 6.500M8.500 2l-7 6.500" stroke="#000" strokeWidth="1.600" /></svg>
                </PlainButton>
              </InfoStrip>
              <InfoPane><InfoInner /></InfoPane>
            </RightPane>
          </Workspace>
        </Frame>
      </FrameBackdrop>

      <Watermark>
        <BigLetter>G</BigLetter>
        <MarkRight>
          <MarkTop><span>X</span><span>I</span><MarkHan>网</MarkHan></MarkTop>
          <MarkDomain>system.com</MarkDomain>
        </MarkRight>
      </Watermark>

      <Dialog role="dialog" aria-labelledby="dialog-name">
        <DialogTitle>
          <DialogName id="dialog-name"><MiniTape />新建备份</DialogName>
          <CaptionButtons $dialog>
            <CaptionButton $tone="steel" aria-label="最小化"><WindowGlyph kind="min" /></CaptionButton>
            <CaptionButton $tone="steel" aria-label="最大化" disabled><WindowGlyph kind="max" muted /></CaptionButton>
            <CaptionButton $tone="red" aria-label="关闭对话框"><WindowGlyph kind="close" /></CaptionButton>
          </CaptionButtons>
        </DialogTitle>
        <DialogBody>
          <TabList role="tablist">
            {tabs.map((t) => (
              <Tab key={t} role="tab" aria-selected={t === "高级"} $active={t === "高级"}>{t}</Tab>
            ))}
          </TabList>
          <TabPage role="tabpanel">
            {options.map((o, i) => (
              <Option key={o.label}>
                <BoxWrap>
                  <Box type="checkbox" $hot={o.hot} checked={checked[i]} onChange={() => toggle(i)} />
                  <svg width="13" height="13" viewBox="0 0 13 13"><path d="M3.500 6.500l2.500 3L10 3" fill="none" stroke="#3d4f8f" strokeWidth="2" /></svg>
                </BoxWrap>
                {o.label}
              </Option>
            ))}
            <FileName type="text" aria-label="文件名" />
          </TabPage>
          <DialogFooter>
            <SplitButton>
              <SplitPart>保存</SplitPart>
              <SplitArrow aria-label="更多保存选项">
                <svg width="12" height="7" viewBox="0 0 12 7"><path d="M0 0h12L6 6z" /></svg>
              </SplitArrow>
            </SplitButton>
            <PushButton>开始</PushButton>
            <PushButton>关闭</PushButton>
          </DialogFooter>
        </DialogBody>
      </Dialog>
    </Desktop>
  );
}
